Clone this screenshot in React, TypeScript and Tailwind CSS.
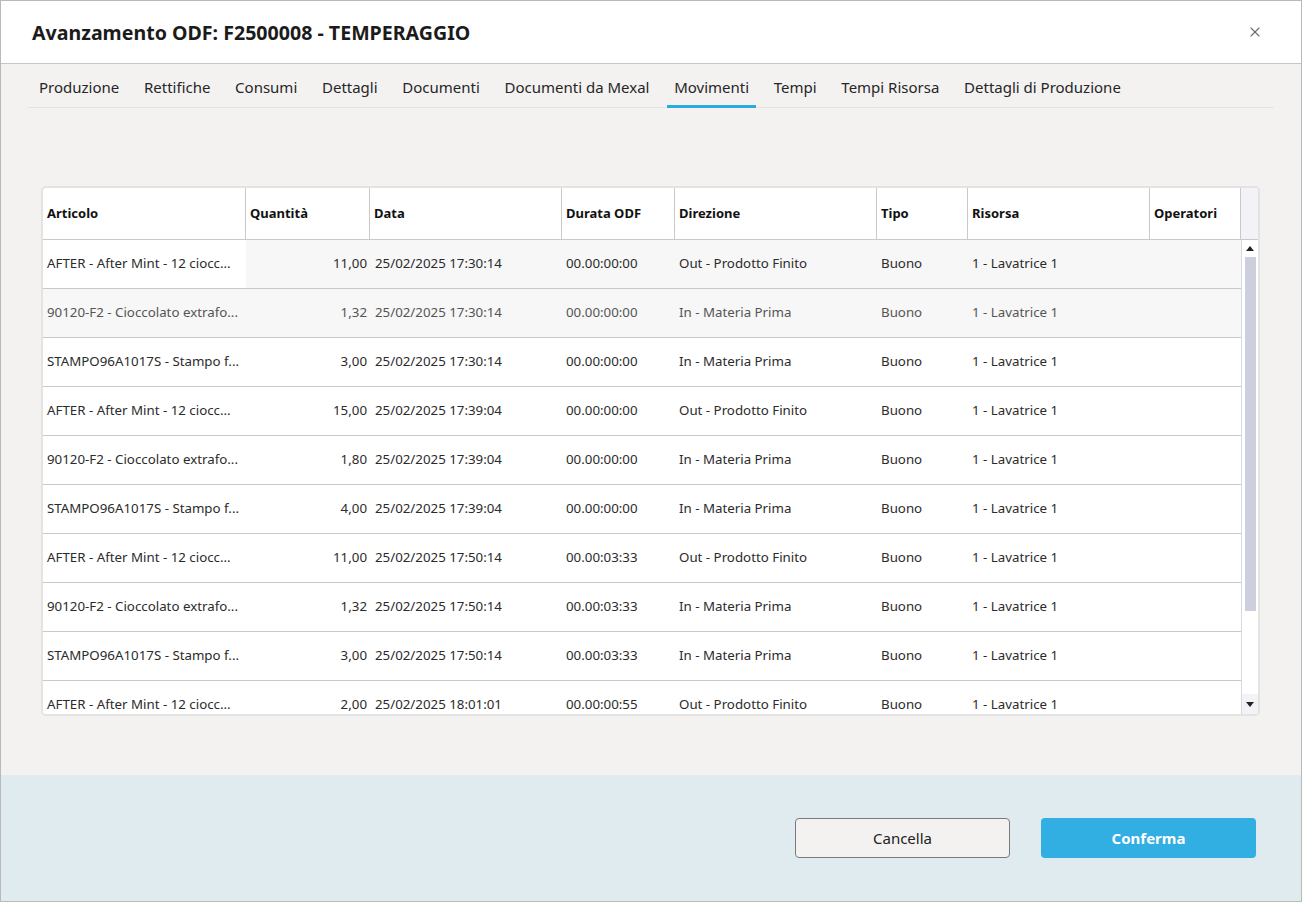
import { X } from "lucide-react";

const font = { fontFamily: '"Noto Sans", "Open Sans", sans-serif' };

const tabs = [
  "Produzione",
  "Rettifiche",
  "Consumi",
  "Dettagli",
  "Documenti",
  "Documenti da Mexal",
  "Movimenti",
  "Tempi",
  "Tempi Risorsa",
  "Dettagli di Produzione",
];

const cols = [
  { key: "articolo", label: "Articolo", w: "w-[203px]" },
  { key: "qta", label: "Quantità", w: "w-[124px]" },
  { key: "data", label: "Data", w: "w-[192px]" },
  { key: "durata", label: "Durata ODF", w: "w-[113px]" },
  { key: "dir", label: "Direzione", w: "w-[202px]" },
  { key: "tipo", label: "Tipo", w: "w-[91px]" },
  { key: "ris", label: "Risorsa", w: "w-[182px]" },
  { key: "op", label: "Operatori", w: "w-[91px]" },
];

type Row = { art: string; qta: string; data: string; durata: string; dir: string };

const rows: Row[] = [
  { art: "AFTER - After Mint - 12 ciocc...", qta: "11,00", data: "25/02/2025 17:30:14", durata: "00.00:00:00", dir: "Out - Prodotto Finito" },
  { art: "90120-F2 - Cioccolato extrafo...", qta: "1,32", data: "25/02/2025 17:30:14", durata: "00.00:00:00", dir: "In - Materia Prima" },
  { art: "STAMPO96A1017S - Stampo f...", qta: "3,00", data: "25/02/2025 17:30:14", durata: "00.00:00:00", dir: "In - Materia Prima" },
  { art: "AFTER - After Mint - 12 ciocc...", qta: "15,00", data: "25/02/2025 17:39:04", durata: "00.00:00:00", dir: "Out - Prodotto Finito" },
  { art: "90120-F2 - Cioccolato extrafo...", qta: "1,80", data: "25/02/2025 17:39:04", durata: "00.00:00:00", dir: "In - Materia Prima" },
  { art: "STAMPO96A1017S - Stampo f...", qta: "4,00", data: "25/02/2025 17:39:04", durata: "00.00:00:00", dir: "In - Materia Prima" },
  { art: "AFTER - After Mint - 12 ciocc...", qta: "11,00", data: "25/02/2025 17:50:14", durata: "00.00:03:33", dir: "Out - Prodotto Finito" },
  { art: "90120-F2 - Cioccolato extrafo...", qta: "1,32", data: "25/02/2025 17:50:14", durata: "00.00:03:33", dir: "In - Materia Prima" },
  { art: "STAMPO96A1017S - Stampo f...", qta: "3,00", data: "25/02/2025 17:50:14", durata: "00.00:03:33", dir: "In - Materia Prima" },
  { art: "AFTER - After Mint - 12 ciocc...", qta: "2,00", data: "25/02/2025 18:01:01", durata: "00.00:00:55", dir: "Out - Prodotto Finito" },
];

function TableRow({ r, i }: { r: Row; i: number }) {
  // first row: hovered except focused first cell; second row: hovered
  const rowBg = i === 0 || i === 1 ? "bg-[#f7f7f7]" : "bg-white";
  const text = i === 1 ? "text-[#555]" : "text-[#2b2b2b]";
  return (
    <div className={`flex h-[49px] shrink-0 border-b border-[#c9c9c9] text-[13.3px] ${rowBg} ${text}`}>
      <div className={`w-[203px] flex items-center pl-[4px] whitespace-nowrap overflow-hidden ${i === 0 ? "bg-white" : ""}`}>{r.art}</div>
      <div className="w-[124px] flex items-center justify-end pr-[3px]">{r.qta}</div>
      <div className="w-[192px] flex items-center pl-[5px]">{r.data}</div>
      <div className="w-[113px] flex items-center pl-[4px]">{r.durata}</div>
      <div className="w-[202px] flex items-center pl-[4px]">{r.dir}</div>
      <div className="w-[91px] flex items-center pl-[4px]">Buono</div>
      <div className="w-[182px] flex items-center pl-[4px]">1 - Lavatrice 1</div>
      <div className="w-[91px]" />
    </div>
  );
}

export default function App() {
  return (
    <div style={font} className="w-full h-[902px] flex flex-col border border-[#b9b9b9] bg-[#f3f2f1] overflow-hidden">
      {/* header */}
      <div className="h-[63px] shrink-0 bg-white border-b border-[#c6c6c6] flex items-center justify-between pl-[31px] pr-[38px]">
        <h1 className="text-[19.6px] font-bold text-[#1b1b1b] pt-[1px]">Avanzamento ODF: F2500008 - TEMPERAGGIO</h1>
        <X size={16} strokeWidth={1.6} className="text-[#6b6b6b]" />
      </div>

      {/* tabs */}
      <div className="mx-[27px] mt-[8px] flex gap-[10.7px] pl-[4px] border-b border-[#e3e3e3]">
        {tabs.map((t) => (
          <div
            key={t}
            className={`px-[7px] pt-[5px] pb-[8px] -mb-px text-[15px] leading-[20px] text-[#262626] border-b-[3px] ${
              t === "Movimenti" ? "border-[#29abe2]" : "border-transparent"
            }`}
          >
            {t}
          </div>
        ))}
      </div>

      {/* content */}
      <div className="flex-1 pt-[78px] pl-[40px] pr-[41px]">
        <div className="border-2 border-[#e3e3e3] rounded-[5px] bg-white overflow-hidden">
          <div className="flex h-[52px] border-b border-[#c9c9c9]">
            {cols.map((c) => (
              <div
                key={c.key}
                className={`${c.w} flex items-center pl-[4px] border-r border-[#c9c9c9] text-[13px] font-bold text-[#111]`}
              >
                {c.label}
              </div>
            ))}
            <div className="flex-1 bg-[#f3f3f7]" />
          </div>
          <div className="flex h-[474px]">
            <div className="w-[1198px] flex flex-col overflow-hidden">
              {rows.map((r, i) => (
                <TableRow key={i} r={r} i={i} />
              ))}
            </div>
            <div className="flex-1 border-l border-[#d9d9e6] bg-white flex flex-col items-center">
              <div className="h-[17px] w-full flex items-center justify-center">
                <svg width="8" height="5" viewBox="0 0 8 5"><path d="M4 0L8 5H0z" fill="#222" /></svg>
              </div>
              <div className="w-[11px] h-[354px] bg-[#cdcfdd]" />
              <div className="flex-1" />
              <div className="h-[20px] w-full flex items-center justify-center bg-[#f3f3f7]">
                <svg width="8" height="5" viewBox="0 0 8 5"><path d="M0 0H8L4 5z" fill="#222" /></svg>
              </div>
            </div>
          </div>
        </div>
      </div>

      {/* footer */}
      <div className="h-[126px] shrink-0 bg-[#e0ebf0] flex justify-end items-start pt-[43px] pr-[45px] gap-[31px]">
        <button className="w-[215px] h-[40px] rounded-[4px] border border-[#7a7a7a] bg-[#f3f2f1] text-[15px] text-[#222]">
          Cancella
        </button>
        <button className="w-[215px] h-[40px] rounded-[4px] bg-[#31aee2] text-[15px] font-bold text-white">
          Conferma
        </button>
      </div>
    </div>
  );
}
